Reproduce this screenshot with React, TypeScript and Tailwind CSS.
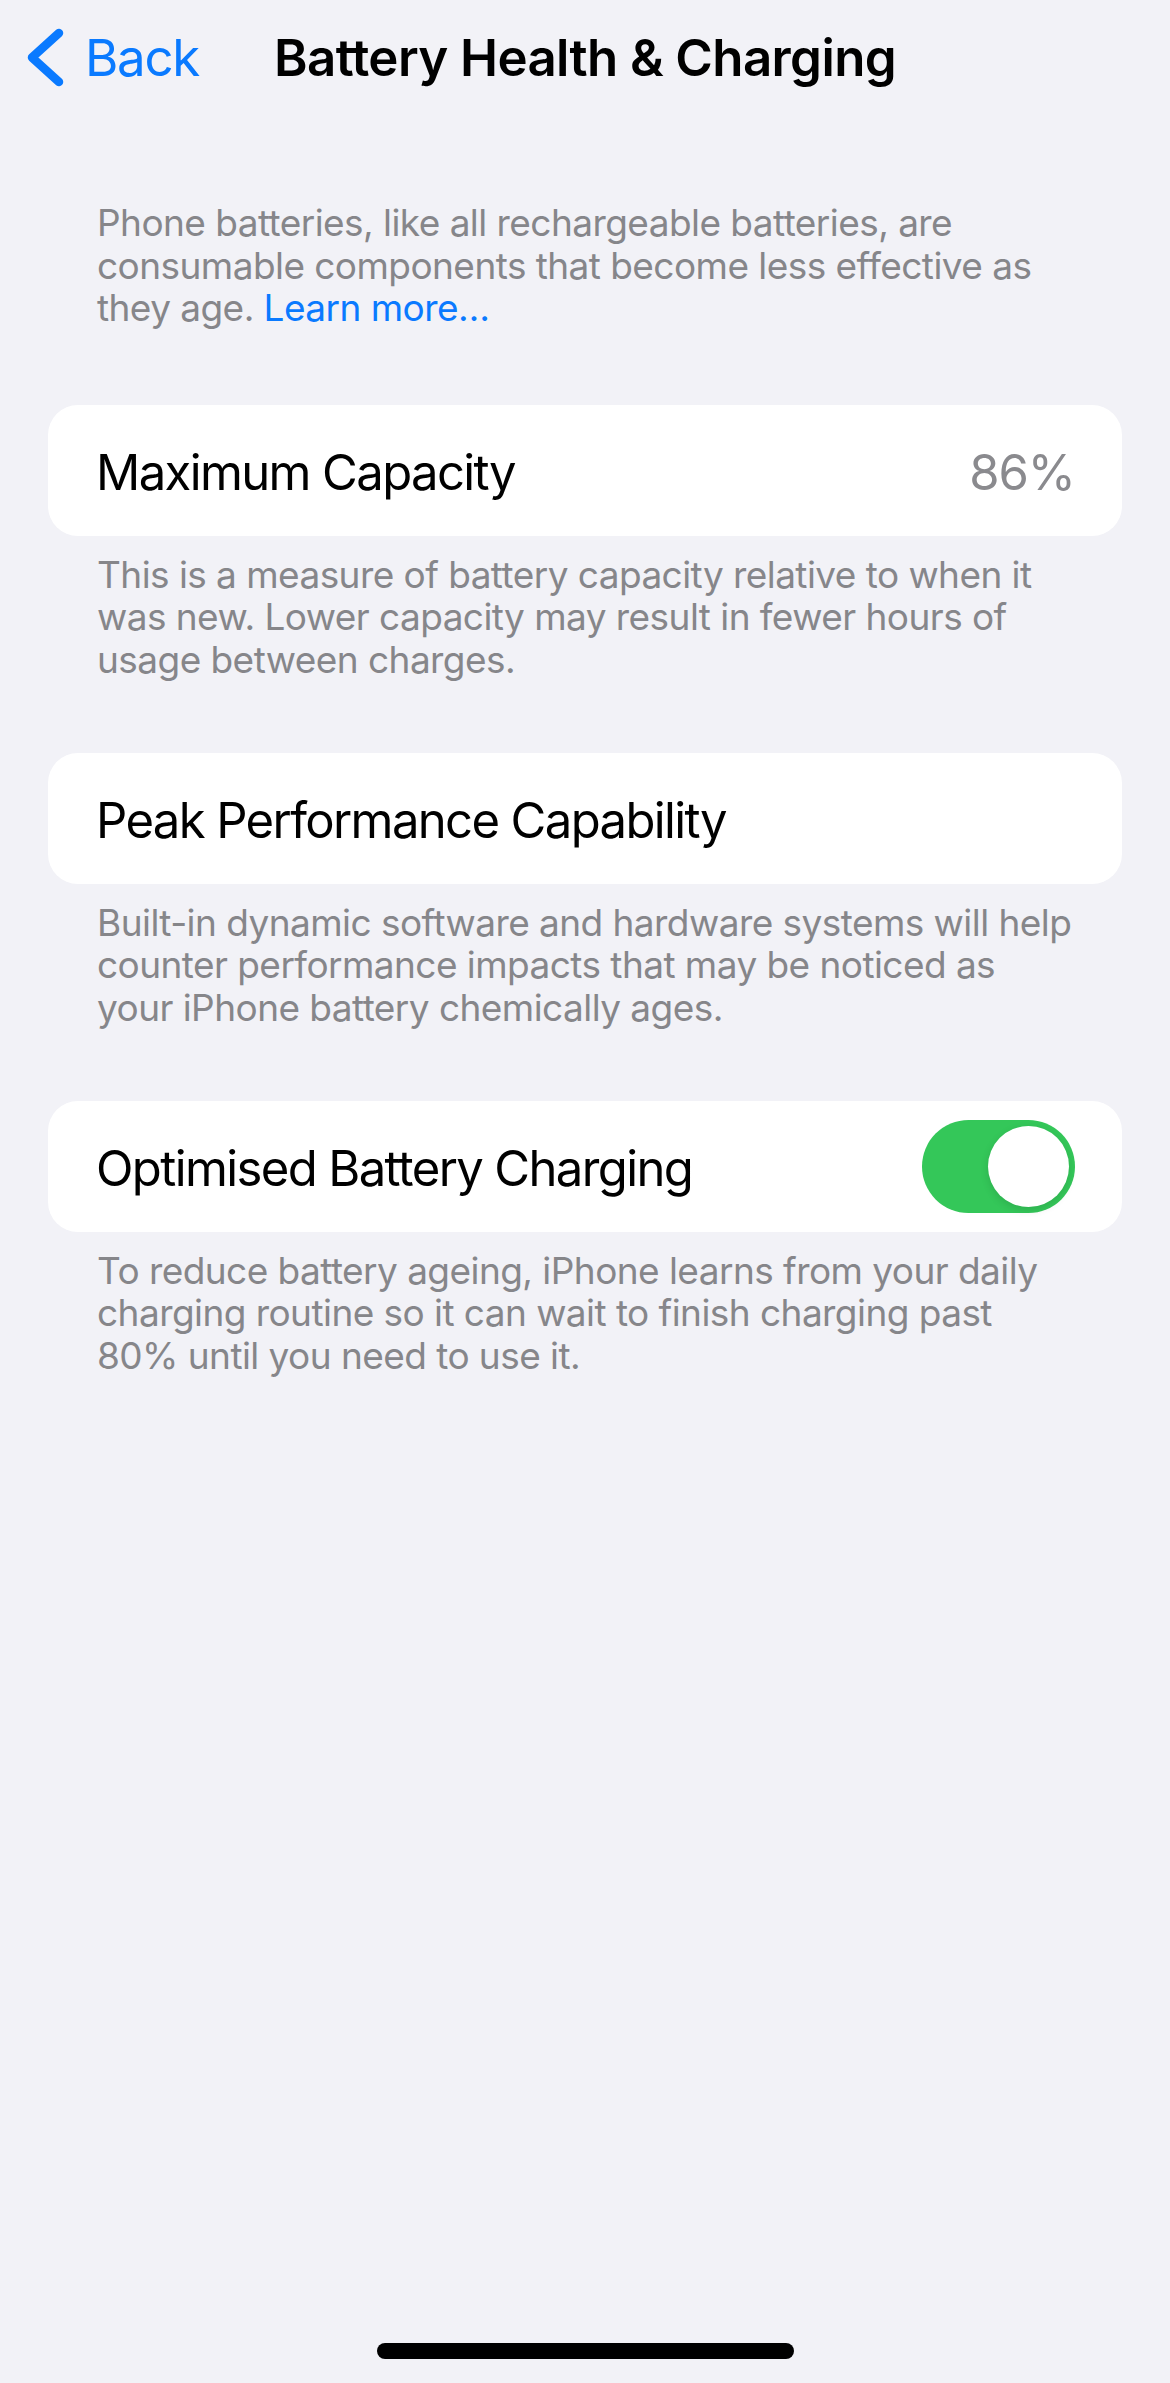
import { ReactNode } from "react";

function Chevron() {
  return (
    <svg width="40" height="62" viewBox="0 0 40 62" fill="none" aria-hidden="true">
      <path d="M33 6 L6 30.5 L33 55" stroke="#0A7AFF" strokeWidth="8.5" strokeLinecap="round" strokeLinejoin="round" />
    </svg>
  );
}

function Toggle({ on }: { on: boolean }) {
  return (
    <div className={`flex h-[93px] w-[153px] items-center rounded-full p-[6px] ${on ? "justify-end bg-[#34C759]" : "justify-start bg-[#E9E9EB]"}`}>
      <span className="h-[81px] w-[81px] rounded-full bg-white shadow-[0_3px_8px_rgba(0,0,0,0.12)]" />
    </div>
  );
}

function Row({ label, children }: { label: string; children?: ReactNode }) {
  return (
    <div className="flex h-[131px] items-center justify-between rounded-[30px] bg-white pl-[48px] pr-[47px]">
      <span className="pt-[5px] text-[49px] leading-[60px] tracking-[-0.033em] text-black">{label}</span>
      {children}
    </div>
  );
}

function Footer({ lines }: { lines: string[] }) {
  return (
    <p className="mt-[18px] pl-[49px] text-[37px] leading-[42.5px] tracking-[-0.015em] text-[#86868A]">
      {lines.map((line, i) => (
        <span key={i} className="block">
          {line}
        </span>
      ))}
    </p>
  );
}

export default function App() {
  return (
    <div className="flex min-h-[2383px] flex-col bg-[#F2F2F7] font-['Inter','Noto_Sans',sans-serif] antialiased">
      <header className="grid h-[116px] grid-cols-[1fr_auto_1fr] items-center">
        <button className="flex items-center gap-[19px] pl-[26px] text-[51px] leading-[60px] tracking-[-0.025em] text-[#0A7AFF]">
          <Chevron />
          <span>Back</span>
        </button>
        <h1 className="text-[51px] font-semibold leading-[60px] tracking-[-0.012em] text-black">
          Battery Health &amp; Charging
        </h1>
        <span />
      </header>

      <main className="mx-12">
        <p className="mt-[86px] pl-[49px] text-[37px] leading-[42.5px] tracking-[-0.015em] text-[#86868A]">
          <span className="block">Phone batteries, like all rechargeable batteries, are</span>
          <span className="block">consumable components that become less effective as</span>
          <span className="block">
            they age. <a className="text-[#0A7AFF]">Learn more…</a>
          </span>
        </p>

        <section className="mt-[75px]">
          <Row label="Maximum Capacity">
            <span className="pt-[5px] text-[49px] leading-[60px] tracking-[-0.02em] text-[#8A8A8E]">86%</span>
          </Row>
          <Footer
            lines={[
              "This is a measure of battery capacity relative to when it",
              "was new. Lower capacity may result in fewer hours of",
              "usage between charges.",
            ]}
          />
        </section>

        <section className="mt-[71.5px]">
          <Row label="Peak Performance Capability" />
          <Footer
            lines={[
              "Built-in dynamic software and hardware systems will help",
              "counter performance impacts that may be noticed as",
              "your iPhone battery chemically ages.",
            ]}
          />
        </section>

        <section className="mt-[71.5px]">
          <Row label="Optimised Battery Charging">
            <Toggle on />
          </Row>
          <Footer
            lines={[
              "To reduce battery ageing, iPhone learns from your daily",
              "charging routine so it can wait to finish charging past",
              "80% until you need to use it.",
            ]}
          />
        </section>
      </main>

      <div className="mx-auto mb-[24px] mt-auto h-[16px] w-[417px] rounded-full bg-black" />
    </div>
  );
}
